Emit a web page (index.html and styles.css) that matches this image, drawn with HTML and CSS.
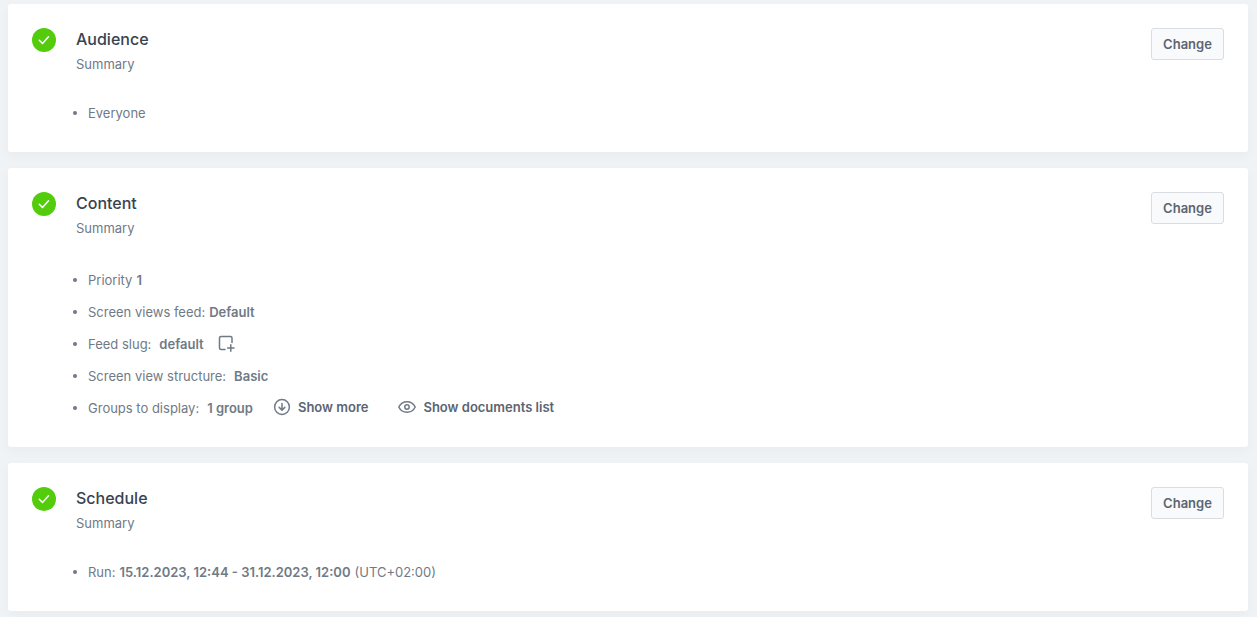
FILE: index.html
```html
<!DOCTYPE html>
<html lang="en">
<head>
<meta charset="utf-8">
<title>Campaign summary</title>
<link rel="stylesheet" href="styles.css">
</head>
<body>
<main class="steps">
  <section class="card">
    <svg class="check" viewBox="0 0 24 24" aria-hidden="true"><circle cx="12" cy="12" r="12"/><path d="M7.300 12.200l3.200 3.200 6-6.600"/></svg>
    <div class="body">
      <h2 class="title">Audience</h2>
      <p class="subtitle">Summary</p>
      <ul class="list">
        <li class="item">Everyone</li>
      </ul>
    </div>
    <button class="change" type="button">Change</button>
  </section>

  <section class="card">
    <svg class="check" viewBox="0 0 24 24" aria-hidden="true"><circle cx="12" cy="12" r="12"/><path d="M7.300 12.200l3.200 3.200 6-6.600"/></svg>
    <div class="body">
      <h2 class="title">Content</h2>
      <p class="subtitle">Summary</p>
      <ul class="list list-long">
        <li class="item"><span>Priority</span><b class="value">1</b></li>
        <li class="item"><span>Screen views feed:</span><b class="value">Default</b></li>
        <li class="item item-wide"><span>Feed slug:</span><b class="value">default</b>
          <button class="copy" type="button" aria-label="Copy slug"><svg class="icon" viewBox="0 0 18 18" aria-hidden="true"><path d="M7 14.500H3Q1.500 14.500 1.500 13V3Q1.500 1.500 3 1.500H12.500Q14 1.500 14 3V7.500M12.800 9.800V16.200M9.600 13H16"/></svg></button>
        </li>
        <li class="item item-wide"><span>Screen view structure:</span><b class="value">Basic</b></li>
        <li class="item item-wide"><span>Groups to display:</span><b class="value">1 group</b>
          <span class="actions">
            <button class="action" type="button"><svg class="icon" viewBox="0 0 18 18" aria-hidden="true"><circle cx="9" cy="9" r="7.400"/><path d="M9 5.500V12M6.200 9.400L9 12.200L11.800 9.400"/></svg>Show more</button>
            <button class="action" type="button"><svg class="icon" viewBox="0 0 18 18" aria-hidden="true"><path d="M.8 9C2.500 5.500 5.500 3.700 9 3.700S15.500 5.500 17.200 9C15.500 12.500 12.500 14.300 9 14.300S2.500 12.500 .8 9Z"/><circle cx="9" cy="9" r="2.200"/></svg>Show documents list</button>
          </span>
        </li>
      </ul>
    </div>
    <button class="change" type="button">Change</button>
  </section>

  <section class="card">
    <svg class="check" viewBox="0 0 24 24" aria-hidden="true"><circle cx="12" cy="12" r="12"/><path d="M7.300 12.200l3.200 3.200 6-6.600"/></svg>
    <div class="body">
      <h2 class="title">Schedule</h2>
      <p class="subtitle">Summary</p>
      <ul class="list">
        <li class="item"><span>Run:</span><b class="value">15.12.2023, 12:44 - 31.12.2023, 12:00</b><span>(UTC+02:00)</span></li>
      </ul>
    </div>
    <button class="change" type="button">Change</button>
  </section>
</main>
</body>
</html>
```
FILE: styles.css
```css
* {
  box-sizing: border-box;
}

body {
  margin: 0;
  background: #eff3f5;
  color: #6f7a86;
  font-family: Inter, "Liberation Sans", sans-serif;
  font-size: 13px;
}

.steps {
  display: flex;
  flex-direction: column;
  gap: 16px;
  padding: 4px 9px 6px 8px;
}

.card {
  display: flex;
  align-items: flex-start;
  gap: 20px;
  padding: 24px 24px 23px;
  border-radius: 3px;
  background: #fff;
  box-shadow: 0 4px 12px rgba(70, 40, 110, 0.03);
}

.check {
  flex: none;
  width: 24px;
  height: 24px;
  fill: #53cd0b;
}

.check path {
  fill: none;
  stroke: #fff;
  stroke-width: 1.5;
  stroke-linecap: round;
  stroke-linejoin: round;
}

.body {
  flex: 1;
  min-width: 0;
}

.title {
  margin: 0;
  color: #38434f;
  font-size: 16px;
  font-weight: 500;
  line-height: 22px;
}

.subtitle {
  margin: 4px 0 0;
  line-height: 20px;
}

.list {
  margin: 23px 0 0;
  padding: 0;
  list-style: none;
}

.list-long {
  margin-top: 26px;
}

.item {
  display: flex;
  align-items: center;
  gap: 4px;
  min-height: 32px;
  line-height: 20px;
}

.item::before {
  content: "";
  flex: none;
  width: 4px;
  height: 4px;
  margin: 0 7px 0 -3px;
  border-radius: 50%;
  background: #6f7a86;
}

.item-wide {
  gap: 8px;
}

.item-wide::before {
  margin-right: 3px;
}

.value {
  font-weight: 600;
}

.icon {
  flex: none;
  width: 18px;
  height: 18px;
  fill: none;
  stroke: #6f7a86;
  stroke-width: 1.5;
  stroke-linecap: round;
  stroke-linejoin: round;
}

.copy,
.action {
  display: flex;
  align-items: center;
  gap: 7px;
  padding: 0;
  border: 0;
  background: none;
  color: #5b6572;
  font: inherit;
  font-weight: 600;
  cursor: pointer;
}

.copy {
  margin-left: 6px;
}

.actions {
  display: flex;
  gap: 30px;
  margin-left: 12px;
  padding-bottom: 2px;
}

.change {
  flex: none;
  min-width: 73px;
  height: 32px;
  padding: 0 11px 1px;
  border: 1px solid #d9dde2;
  border-radius: 3px;
  background: #f9fafc;
  color: #5b6572;
  font: inherit;
  font-weight: 600;
  cursor: pointer;
}
```
